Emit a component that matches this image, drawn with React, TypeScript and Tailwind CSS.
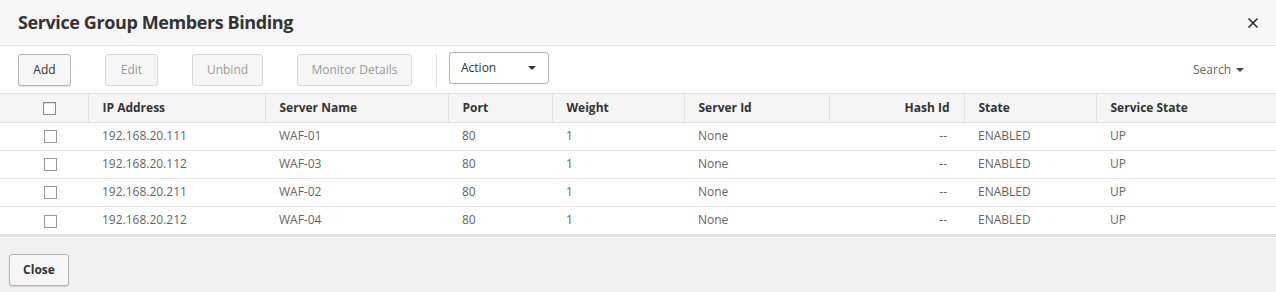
import { X } from 'lucide-react';

const rows = [
  { ip: '192.168.20.111', name: 'WAF-01' },
  { ip: '192.168.20.112', name: 'WAF-03' },
  { ip: '192.168.20.211', name: 'WAF-02' },
  { ip: '192.168.20.212', name: 'WAF-04' },
];

const cols = [
  { label: 'IP Address', w: 'w-[177px]' },
  { label: 'Server Name', w: 'w-[183px]' },
  { label: 'Port', w: 'w-[104px]' },
  { label: 'Weight', w: 'w-[132px]' },
  { label: 'Server Id', w: 'w-[145px]' },
  { label: 'Hash Id', w: 'w-[135px]', right: true },
  { label: 'State', w: 'w-[132px]' },
  { label: 'Service State', w: '' },
];

function Box({ header }: { header?: boolean }) {
  return (
    <span
      className={`inline-block h-[13px] w-[13px] border bg-white align-middle ${header ? 'border-[#8a8a8a] shadow-[inset_0_1px_1px_rgba(0,0,0,0.15)]' : 'border-[#9a9a9a]'}`}
    />
  );
}

function Caret() {
  return <span className="ml-[5px] inline-block h-0 w-0 border-x-[4px] border-t-[4px] border-x-transparent border-t-[#444] align-middle" />;
}

function Btn({ children, disabled, w }: { children: string; disabled?: boolean; w: string }) {
  return (
    <button
      className={`h-[32px] ${w} rounded-[3px] border text-center text-[12px] ${disabled ? 'border-[#d8d8d8] bg-[#f6f6f6] text-[#9a9a9a]' : 'border-[#b5b5b5] bg-[#f6f6f6] text-[#333] shadow-[0_1px_1px_rgba(0,0,0,0.12)]'}`}
    >
      {children}
    </button>
  );
}

export default function App() {
  return (
    <div className="h-[292px] w-[1276px] overflow-hidden bg-white font-['Open_Sans',sans-serif] text-[#333]">
      {/* header */}
      <div className="flex h-[46px] items-center justify-between border-b border-[#e2e2e2] bg-[#f7f7f7] pl-[18px] pr-[15px]">
        <h1 className="text-[18px] font-bold tracking-[-0.4px] text-[#333]">Service Group Members Binding</h1>
        <X size={16} strokeWidth={2.6} className="text-[#333]" />
      </div>

      {/* toolbar */}
      <div className="flex h-[48px] items-center border-b border-[#e2e2e2] pl-[18px] pr-[32px]">
        <div className="flex items-center gap-[34px]">
          <Btn w="w-[53px]">Add</Btn>
          <Btn w="w-[53px]" disabled>Edit</Btn>
          <Btn w="w-[71px]" disabled>Unbind</Btn>
          <Btn w="w-[115px]" disabled>Monitor Details</Btn>
        </div>
        <div className="ml-[24px] h-[32px] w-px bg-[#dcdcdc]" />
        <button className="mb-[4px] ml-[12px] flex h-[32px] w-[100px] items-center justify-between rounded-[3px] border border-[#b5b5b5] bg-white pl-[11px] pr-[12px] text-[12px] text-[#333]">
          Action
          <span className="inline-block h-0 w-0 border-x-[4px] border-t-[4px] border-x-transparent border-t-[#333]" />
        </button>
        <div className="ml-auto flex items-center text-[12px] text-[#666]">
          Search
          <Caret />
        </div>
      </div>

      {/* table */}
      <table className="w-full table-fixed border-collapse text-[12px]">
        <thead>
          <tr className="h-[28px] border-b border-[#e2e2e2] bg-[#f5f5f5] text-left">
            <th className="w-[88px] border-r border-[#e2e2e2] pl-[12px] text-center font-normal">
              <Box header />
            </th>
            {cols.map((c, i) => (
              <th
                key={c.label}
                className={`${c.w} px-[14px] font-bold text-[#333] ${i < cols.length - 1 ? 'border-r border-[#e2e2e2]' : ''} ${c.right ? 'text-right' : ''}`}
              >
                {c.label}
              </th>
            ))}
          </tr>
        </thead>
        <tbody className="text-[#666]">
          {rows.map((r) => (
            <tr key={r.ip} className="h-[28px] border-b border-[#e6e6e6] last:border-b-0">
              <td className="pl-[12px] text-center"><Box /></td>
              <td className="px-[14px]">{r.ip}</td>
              <td className="px-[14px]">{r.name}</td>
              <td className="px-[14px]">80</td>
              <td className="px-[14px]">1</td>
              <td className="px-[14px]">None</td>
              <td className="px-[17px] text-right">--</td>
              <td className="px-[14px]">ENABLED</td>
              <td className="px-[14px]">UP</td>
            </tr>
          ))}
        </tbody>
      </table>

      {/* footer */}
      <div className="h-[3px] bg-[#e4e4e4]" />
      <div className="h-full border-t border-white bg-[#f0f0f0] pl-[9px] pt-[16px]">
        <button className="h-[32px] w-[60px] rounded-[3px] border border-[#b5b5b5] bg-[#f6f6f6] text-[12px] font-bold text-[#333] shadow-[0_1px_1px_rgba(0,0,0,0.12)]">
          Close
        </button>
      </div>
    </div>
  );
}
